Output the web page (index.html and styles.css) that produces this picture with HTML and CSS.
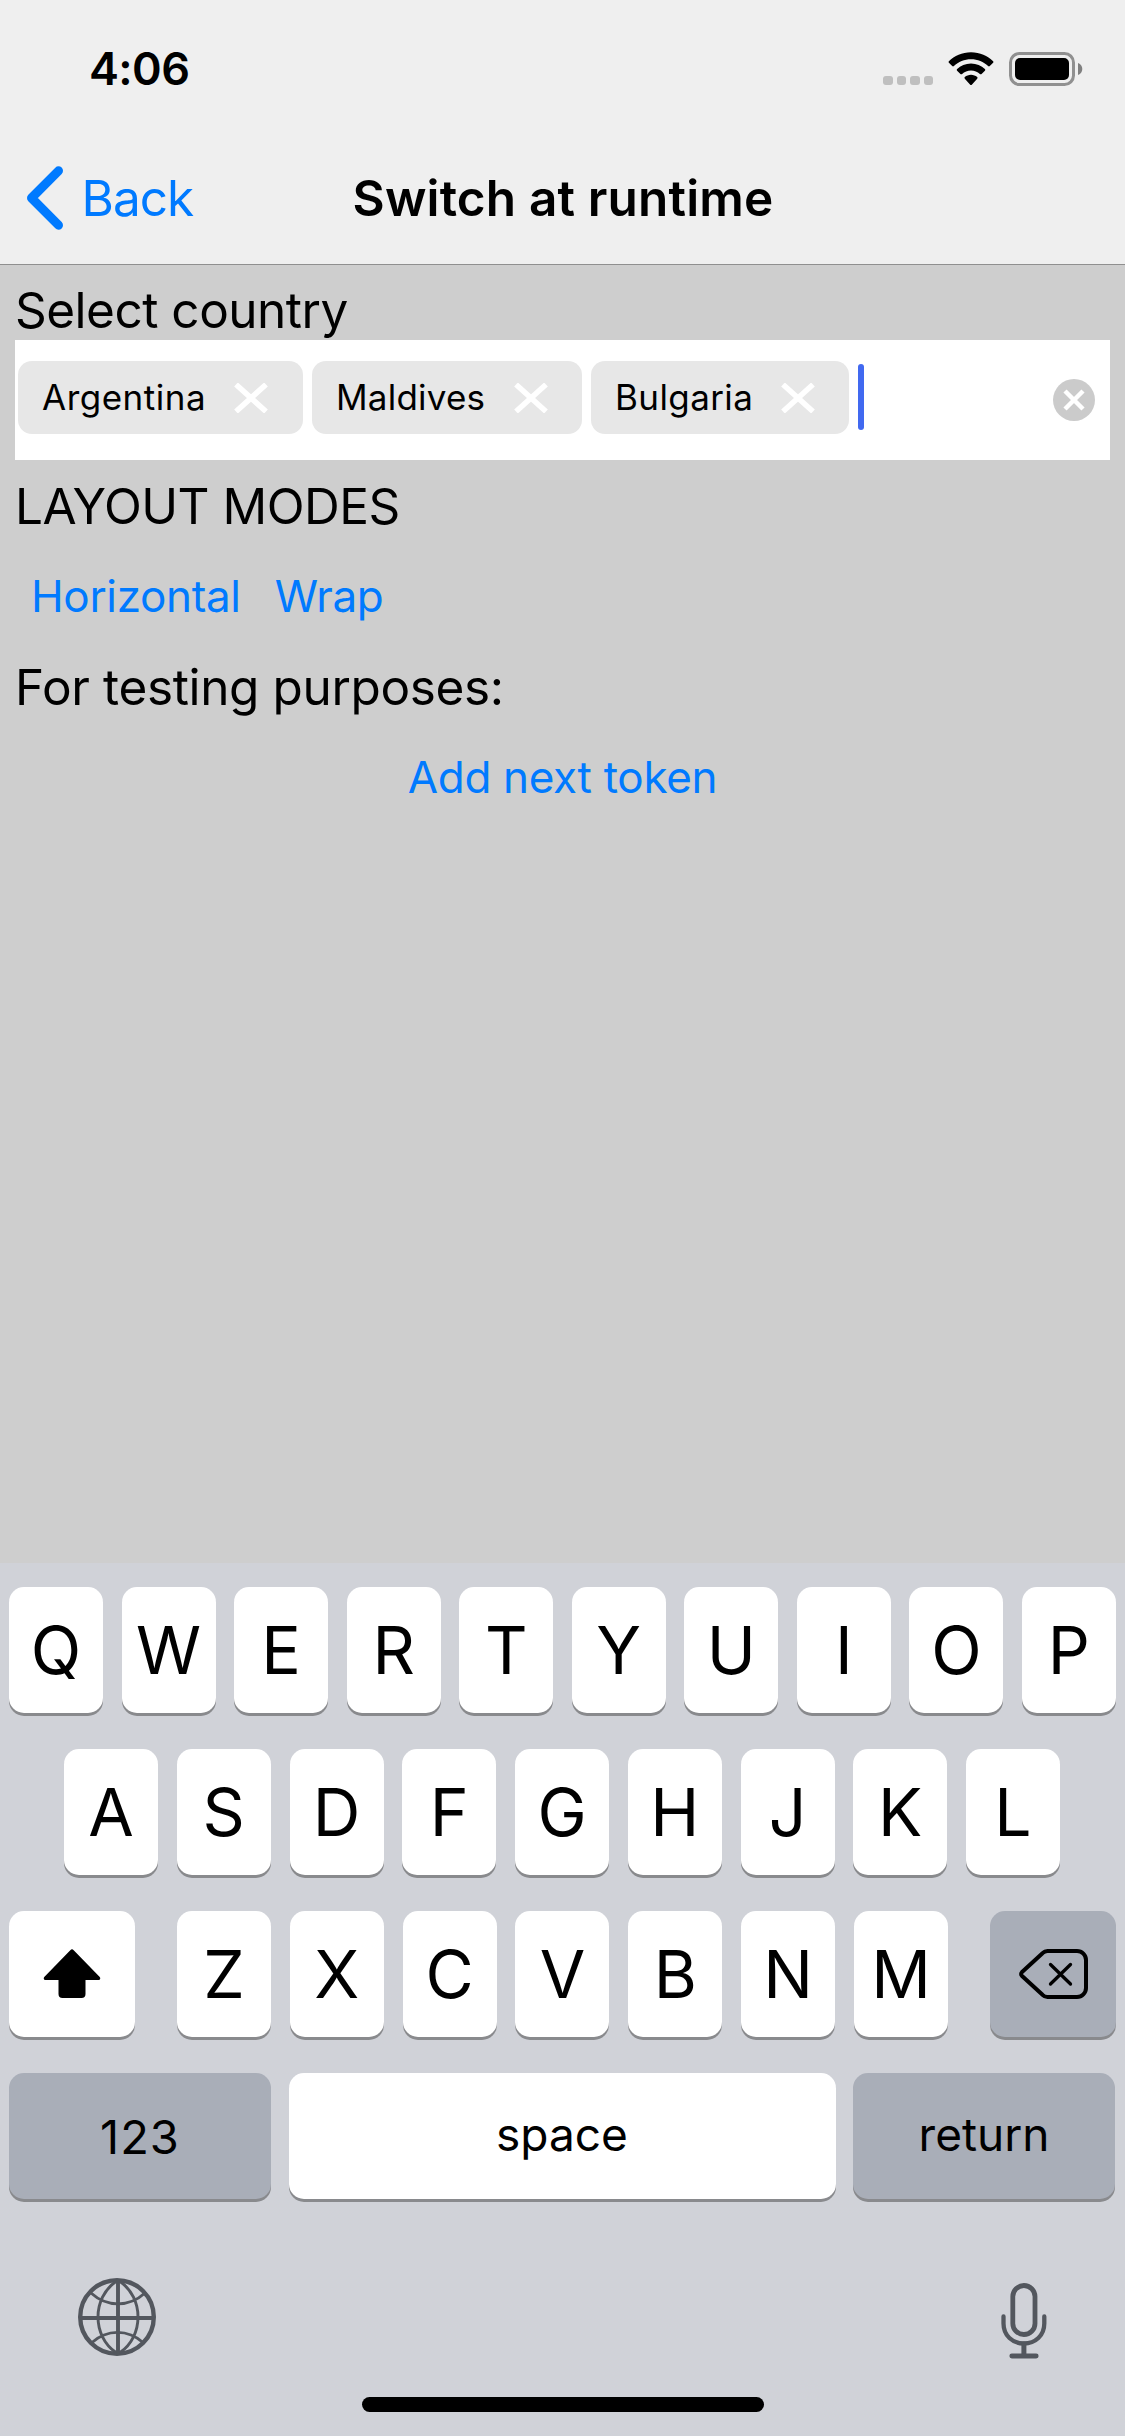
FILE: index.html
```html
<!DOCTYPE html>
<html lang="en">
<head>
<meta charset="utf-8">
<title>Switch at runtime</title>
<link rel="stylesheet" href="styles.css">
</head>
<body>
<div class="screen">
  <header class="header">
    <div class="status">
      <span class="time">4:06</span>
      <div class="indicators">
        <div class="dots"><i></i><i></i><i></i><i></i></div>
        <svg class="wifi" width="46" height="34" viewBox="0 0 46 34">
          <path d="M23 0.3C14 .3 6.400 3.800.9 9.200a1.100 1.100 0 0 0 0 1.600l3.300 3.300c.5.500 1.200.5 1.700 0C10.400 9.800 16.400 7.300 23 7.300s12.600 2.500 17.100 6.800c.5.500 1.200.5 1.700 0l3.300-3.300a1.100 1.100 0 0 0 0-1.600C39.600 3.800 32 .3 23 .3z"/>
          <path d="M23 11.500c-5.500 0-10.300 2.100-13.900 5.500-.5.500-.5 1.200 0 1.700l3.300 3.200c.5.500 1.200.5 1.700 0 2.400-2.100 5.400-3.400 8.900-3.400s6.500 1.300 8.900 3.400c.5.500 1.200.5 1.700 0l3.300-3.200c.5-.5.5-1.200 0-1.700-3.600-3.400-8.400-5.500-13.900-5.500z"/>
          <path d="M23 22.800c-2.400 0-4.500.9-6.200 2.300-.5.500-.5 1.100 0 1.600l5.400 6c.4.500 1.200.5 1.600 0l5.400-6c.5-.5.5-1.100 0-1.600-1.700-1.400-3.800-2.300-6.200-2.300z"/>
        </svg>
        <svg class="battery" width="74" height="34" viewBox="0 0 74 34">
          <rect x="1.500" y="1.500" width="63" height="31" rx="9" fill="none" stroke="#909090" stroke-width="3"/>
          <rect x="6" y="6" width="54" height="22" rx="5"/>
          <path d="M69 11c3 1 4.300 3.500 4.300 6S72 22 69 23z" fill="#808080"/>
        </svg>
      </div>
    </div>
    <nav class="nav">
      <a class="back">
        <svg width="38" height="64" viewBox="0 0 38 64"><path d="M31.500 4.800 4.500 32l27 27.200" fill="none" stroke="#007aff" stroke-width="9" stroke-linecap="round" stroke-linejoin="round"/></svg>
        <span class="back-label">Back</span>
      </a>
      <h1 class="title">Switch at runtime</h1>
    </nav>
  </header>

  <main class="content">
    <p class="label select-label">Select country</p>
    <div class="field">
      <div class="token token-ar"><span>Argentina</span><svg width="34" height="30" viewBox="0 0 34 30"><path d="M2 1.500 32 28.500M32 1.500 2 28.500"/></svg></div>
      <div class="token token-mv"><span>Maldives</span><svg width="34" height="30" viewBox="0 0 34 30"><path d="M2 1.500 32 28.500M32 1.500 2 28.500"/></svg></div>
      <div class="token token-bg"><span>Bulgaria</span><svg width="34" height="30" viewBox="0 0 34 30"><path d="M2 1.500 32 28.500M32 1.500 2 28.500"/></svg></div>
      <span class="caret"></span>
      <svg class="clear" width="42" height="42" viewBox="0 0 42 42"><circle cx="21" cy="21" r="21" fill="#cbcbcb"/><path d="M12 12 30 30M30 12 12 30" stroke="#fff" stroke-width="4.500"/></svg>
    </div>
    <p class="label modes-label">LAYOUT MODES</p>
    <div class="modes">
      <a class="link">Horizontal</a>
      <a class="link">Wrap</a>
    </div>
    <p class="label test-label">For testing purposes:</p>
    <a class="link add">Add next token</a>
  </main>

  <section class="keyboard">
    <div class="row">
      <b class="key">Q</b><b class="key">W</b><b class="key">E</b><b class="key">R</b><b class="key">T</b><b class="key">Y</b><b class="key">U</b><b class="key">I</b><b class="key">O</b><b class="key">P</b>
    </div>
    <div class="row row-home">
      <b class="key">A</b><b class="key">S</b><b class="key">D</b><b class="key">F</b><b class="key">G</b><b class="key">H</b><b class="key">J</b><b class="key">K</b><b class="key">L</b>
    </div>
    <div class="row">
      <b class="key key-mod"><svg width="58" height="50" viewBox="0 0 58 50"><path d="M27.300 1.200a2.400 2.400 0 0 1 3.400 0L56.500 27.800c1.400 1.500.7 3.200-1 3.200H42.500V45a4 4 0 0 1-4 4h-19a4 4 0 0 1-4-4V31H2.500c-1.700 0-2.400-1.700-1-3.200z"/></svg></b>
      <div class="letters">
        <b class="key">Z</b><b class="key">X</b><b class="key">C</b><b class="key">V</b><b class="key">B</b><b class="key">N</b><b class="key">M</b>
      </div>
      <b class="key key-mod dark"><svg width="69" height="50" viewBox="0 0 69 50"><path d="M28.500 2H58a9 9 0 0 1 9 9v28a9 9 0 0 1-9 9H28.500c-2 0-3.600-.8-5-2.200L2.800 26.700a2.400 2.400 0 0 1 0-3.400L23.500 4.200C24.900 2.800 26.500 2 28.500 2z" fill="none" stroke="#000" stroke-width="4"/><path d="M31.500 15.500l20 19.500M51.500 15.500l-20 19.500" stroke="#000" stroke-width="3.300" stroke-linecap="round"/></svg></b>
    </div>
    <div class="row row-space">
      <b class="key key-wide dark num">123</b>
      <b class="key key-space word">space</b>
      <b class="key key-wide dark word">return</b>
    </div>
    <div class="tools">
      <svg width="78" height="78" viewBox="0 0 78 78" fill="none" stroke="#53575e">
        <circle cx="39" cy="39" r="36.800" stroke-width="4.400"/>
        <path d="M40 2v74M2 40h74" stroke-width="3.900"/>
        <path d="M38 3.500C14 20 14 58 38 74.500M42 3.500C66 20 66 58 42 74.500M13 15c16 14.500 38 14.500 54 0M14 64.500c15-13.500 36-13.500 51 0" stroke-width="2.900"/>
      </svg>
      <svg class="mic" width="46" height="76" viewBox="0 0 46 76" fill="none" stroke="#53575e" stroke-linecap="round">
        <rect x="11.800" y="2.500" width="22.200" height="49" rx="11.100" stroke-width="4.800"/>
        <path d="M2.500 33.500v7c0 12 9 20 20.400 20s20.400-8 20.400-20v-7" stroke-width="4.300"/>
        <path d="M22.900 61v11" stroke-width="5"/>
        <path d="M10.800 73h24.400" stroke-width="4.800"/>
      </svg>
    </div>
    <div class="home-bar"></div>
  </section>
</div>
</body>
</html>
```
FILE: styles.css
```css
* { box-sizing: border-box; }
body { margin: 0; }
svg { display: block; flex: none; }

.screen {
  width: 1125px;
  height: 2436px;
  display: flex;
  flex-direction: column;
  background: #cecece;
  color: #000;
  font-family: Inter, "Liberation Sans", sans-serif;
  overflow: hidden;
}

/* Header */
.header {
  height: 265px;
  background: #efefef;
  border-bottom: 1px solid #8f8f8f;
}
.status {
  height: 132px;
  padding: 5px 42px 0 89px;
  display: flex;
  align-items: center;
  justify-content: space-between;
}
.time { font-size: 45px; font-weight: 600; letter-spacing: -0.6px; }
.indicators { display: flex; align-items: center; padding-top: 1px; }
.dots { display: flex; gap: 4px; margin: 23px 15px 0 0; }
.dots i { width: 9.500px; height: 9px; border-radius: 3px; background: #bfbfbf; }
.wifi { margin-right: 15px; }
.nav {
  height: 132px;
  padding: 0 26px 0 27px;
  display: grid;
  grid-template-columns: 1fr auto 1fr;
  align-items: center;
}
.back {
  display: flex;
  align-items: center;
  gap: 16.500px;
  color: #007aff;
  font-size: 49.5px;
  letter-spacing: -1px;
}
.title { margin: 0; font-size: 49.5px; font-weight: 600; letter-spacing: 0.16px; }

/* Content */
.content {
  flex: 1;
  padding: 15px 15px 0;
  display: flex;
  flex-direction: column;
}
.label { margin: 0; font-size: 49.5px; line-height: 60px; letter-spacing: -0.36px; }
.select-label { letter-spacing: -0.5px; }
.modes-label { margin-top: 16px; letter-spacing: -0.5px; }
.test-label { margin-top: 31px; }
.field {
  height: 120px;
  padding: 0 15px 0 3px;
  display: flex;
  align-items: center;
  background: #fff;
}
.token {
  height: 73px;
  margin: -5px 9px 0 0;
  padding: 0 35px 0 24px;
  display: flex;
  align-items: center;
  justify-content: space-between;
  border-radius: 14px;
  background: #e7e7e7;
  font-size: 35px;
  letter-spacing: 0.5px;
}
.token span { padding-bottom: 2px; }
.token svg { stroke: #fff; stroke-width: 5.5px; }
.token-ar { width: 285px; }
.token-mv { width: 270px; padding-right: 34px; letter-spacing: 0.22px; }
.token-bg { width: 258px; padding-right: 34px; letter-spacing: 0.4px; }
.caret { width: 6px; height: 66px; margin-top: -6px; border-radius: 3px; background: #4169f0; }
.clear { margin-left: auto; }
.link { font-size: 44px; line-height: 60px; letter-spacing: -0.33px; color: #007aff; }
.modes { display: flex; gap: 34px; margin-top: 30px; padding-left: 16px; }
.add { margin-top: 30px; align-self: center; }

/* Keyboard */
.keyboard {
  height: 873px;
  padding: 24px 9px 0;
  display: flex;
  flex-direction: column;
  gap: 36px;
  background: #d0d2d8;
}
.row { display: flex; justify-content: space-between; }
.row-home { padding: 0 56px 0 55px; }
.row-space { padding-right: 1px; }
.letters { width: 771px; display: flex; justify-content: space-between; }
.key {
  width: 94px;
  height: 126px;
  display: flex;
  align-items: center;
  justify-content: center;
  border-radius: 15px;
  background: #fff;
  box-shadow: 0 3px 0 #898a8d;
  font-size: 66px;
  font-weight: 400;
}
.key-mod { width: 126px; }
.key-wide { width: 262px; }
.key-space { width: 547px; }
.dark { background: #a9aeb8; }
.num { font-size: 47px; letter-spacing: 1px; }
.word { font-size: 46px; padding-bottom: 4px; }
.tools {
  display: flex;
  justify-content: space-between;
  align-items: center;
  margin-top: 43px;
  padding: 0 69px;
}
.mic { margin-bottom: -7px; }
.home-bar {
  width: 402px;
  height: 15px;
  margin: 5px auto 0;
  border-radius: 7.5px;
  background: #000;
}
```
